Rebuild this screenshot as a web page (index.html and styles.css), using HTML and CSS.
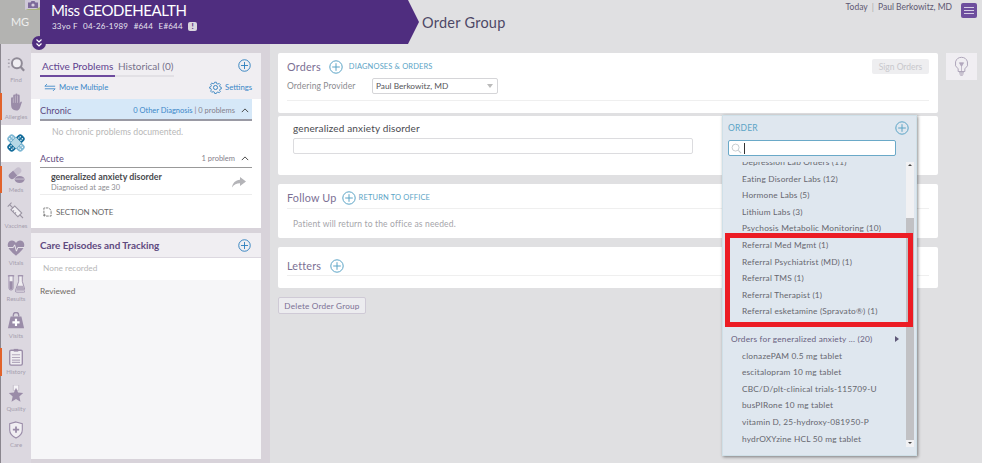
FILE: index.html
```html
<!DOCTYPE html>
<html lang="en">
<head>
<meta charset="utf-8">
<title>Order Group</title>
<link rel="stylesheet" href="styles.css">
</head>
<body>
<svg class="defs" width="0" height="0" aria-hidden="true">
  <symbol id="plus" viewBox="0 0 14 14"><circle cx="7" cy="7" r="6.200" fill="none" stroke="currentColor" stroke-width="1"/><path d="M7 3.200v7.600M3.200 7h7.600" stroke="currentColor" stroke-width="1" fill="none"/></symbol>
  <symbol id="chev" viewBox="0 0 10 6"><path d="M1 5l4-4 4 4" fill="none" stroke="currentColor" stroke-width="1.200"/></symbol>
</svg>
<div class="app">
  <header class="top">
    <div class="avatar">MG
      <svg class="cam" viewBox="0 0 15 10"><path d="M0 0h15v10H0z" fill="#cfc8d8"/><path d="M0 10l3-1h8l4-2v3z" fill="#a9b27c"/><path d="M3 2.500h2.500l1-1.500h3l1 1.500H13V8H3z" fill="#7d6a9a"/><circle cx="8" cy="5" r="1.600" fill="#d8d0e0"/></svg>
    </div>
    <div class="banner">
      <h1 class="patient">Miss GEODEHEALTH</h1>
      <div class="meta"><span>33yo F</span><span>04-26-1989</span><span>#644</span><span>E#644</span><b class="alert">!</b></div>
    </div>
    <h2 class="page-title">Order Group</h2>
    <div class="user">Today <i>|</i> Paul Berkowitz, MD</div>
    <button class="menu" aria-label="Menu"><span></span><span></span><span></span></button>
    <span class="expand"><svg viewBox="0 0 10 10"><path d="M2.500 1.500L5 4l2.500-2.500M2.500 5.500L5 8l2.500-2.500" fill="none" stroke="#fff" stroke-width="1.200"/></svg></span>
  </header>
  <div class="body">
    <nav class="rail">
      <a class="nav"><svg viewBox="0 0 20 20"><circle cx="11" cy="8" r="5.500" fill="#f0eef2" stroke="#8f8a96" stroke-width="2.200"/><path d="M15 12l4 4.500" stroke="#8f8a96" stroke-width="2.500"/><path d="M1 4h3M1 8h2M1 12h3" stroke="#a8a4ae" stroke-width="1.500" stroke-dasharray="2 1"/></svg>Find</a>
      <a class="nav flag"><svg viewBox="0 0 20 20"><path d="M4.500 12V6a1.200 1.200 0 012.400 0V3a1.200 1.200 0 012.400 0V1.800a1.200 1.200 0 012.400 0V3a1.200 1.200 0 012.400 0v9c0 0 .6-2 1.500-2.600l1 .6-2 6c-.6 2-2 3.500-4.500 3.500-3.500 0-5.500-2.200-5.500-5.500z" fill="#9a8ca8"/><path d="M7 6v5M9.300 3v8M11.700 3v8" stroke="#d8d3da" stroke-width=".6"/></svg>Allergies</a>
      <a class="nav on"><svg class="big" viewBox="0 0 22 22"><g transform="rotate(45 11 11)"><rect x="1" y="7" width="20" height="8" rx="3" fill="#7fb8d4"/><rect x="7" y="1" width="8" height="20" rx="3" fill="#146c9a"/><rect x="7" y="7" width="8" height="8" fill="#b6d8e6"/><g fill="#fff"><circle cx="9.500" cy="3.500" r=".7"/><circle cx="12.500" cy="3.500" r=".7"/><circle cx="9.500" cy="5.500" r=".7"/><circle cx="12.500" cy="5.500" r=".7"/><circle cx="9.500" cy="16.500" r=".7"/><circle cx="12.500" cy="16.500" r=".7"/><circle cx="9.500" cy="18.500" r=".7"/><circle cx="12.500" cy="18.500" r=".7"/><circle cx="3.500" cy="9.500" r=".7"/><circle cx="3.500" cy="12.500" r=".7"/><circle cx="5.500" cy="9.500" r=".7"/><circle cx="5.500" cy="12.500" r=".7"/><circle cx="16.500" cy="9.500" r=".7"/><circle cx="16.500" cy="12.500" r=".7"/><circle cx="18.500" cy="9.500" r=".7"/><circle cx="18.500" cy="12.500" r=".7"/></g></g></svg></a>
      <a class="nav flag"><svg viewBox="0 0 20 20"><g transform="rotate(-40 9 8)"><rect x="1" y="4.500" width="16" height="7" rx="3.500" fill="#c6bfce"/><path d="M1 8a3.500 3.500 0 013.500-3.500H9v7H4.500A3.500 3.500 0 011 8z" fill="#9a8ca8"/></g><ellipse cx="14" cy="15" rx="5.500" ry="3.800" fill="#9a8ca8"/><path d="M9 14.500h10" stroke="#dcd8e0" stroke-width=".8"/></svg>Meds</a>
      <a class="nav"><svg viewBox="0 0 20 20"><g transform="rotate(-45 10 10)"><rect x="7" y="5" width="6" height="11" fill="#f0eef2" stroke="#9a94a2" stroke-width="1.200"/><path d="M10 5V0M7 0h6M10 16v5M7 8h2M7 11h2" stroke="#9a94a2" stroke-width="1.200"/></g></svg>Vaccines</a>
      <a class="nav"><svg viewBox="0 0 20 20"><path d="M10 18.500C5 14.500 .8 11 .8 6.500.8 3.500 3.300 1.800 5.500 1.800 7.500 1.800 9 3 10 4.500 11 3 12.500 1.800 14.500 1.800 16.700 1.800 19.200 3.500 19.200 6.500c0 4.500-4.200 8-9.200 12z" fill="#9a8ca8"/><path d="M1 9.500h6l1.500-3 2 7L12 9.500h7" fill="none" stroke="#f0eef2" stroke-width="1"/></svg>Vitals</a>
      <a class="nav"><svg viewBox="0 0 20 20"><path d="M1 1h7M12 1h6" stroke="#9a8ca8" stroke-width="1.200"/><path d="M2.200 1h4.600v13.500a2.300 2.300 0 01-4.600 0z" fill="#efedf1" stroke="#9a8ca8"/><path d="M2.700 7h3.600v7.500a1.800 1.800 0 01-3.600 0z" fill="#9a8ca8"/><path d="M13 1h4v6l3 10a1.500 1.500 0 01-1.500 2H11a1.500 1.500 0 01-1.500-2L13 7z" fill="#efedf1" stroke="#9a8ca8"/><path d="M11.500 12h6.800l1.200 5.500H10z" fill="#b3a9bd"/></svg>Results</a>
      <a class="nav"><svg viewBox="0 0 20 20"><path d="M7 5V3.500a3 3 0 016 0V5" fill="none" stroke="#9a8ca8" stroke-width="1.500"/><path d="M4 5h12l3 13H1z" fill="#9a8ca8"/><path d="M10 7.500v8M6 11.500h8" stroke="#fff" stroke-width="2.400"/></svg>Visits</a>
      <a class="nav flag"><svg viewBox="0 0 20 20"><rect x="3" y="2.500" width="14" height="16.500" rx="1.500" fill="#f0eef2" stroke="#9a8ca8" stroke-width="1.500"/><rect x="7.500" y="1" width="5" height="3" fill="#9a8ca8"/><path d="M5.500 7.500h9M5.500 10.500h9M5.500 13.500h9M5.500 16h9" stroke="#b3a9bd" stroke-width="1.200"/></svg>History</a>
      <a class="nav"><svg viewBox="0 0 20 20"><path d="M7 0h6v6H7z" fill="#f5f3f7" stroke="#c5bfcb"/><path d="M10 3l2.300 5.400 5.700.5-4.300 3.800 1.300 5.800L10 15.500l-5 3 1.300-5.800L2 8.900l5.700-.5z" fill="#9a8ca8"/></svg>Quality</a>
      <a class="nav"><svg viewBox="0 0 20 20"><path d="M10 1l7 2v7c0 4-3 7-7 9-4-2-7-5-7-9V3z" fill="#f0eef2" stroke="#9a8ca8" stroke-width="1.200"/><path d="M10 6v7M6.500 9.500h7" stroke="#9a8ca8" stroke-width="2"/></svg>Care</a>
    </nav>
    <aside class="side">
      <section class="panel problems">
        <div class="panel-head">
          <div class="tabs">
            <span class="tab active">Active Problems</span><span class="tab">Historical (0)</span>
            <svg class="ico-plus blue"><use href="#plus"/></svg>
          </div>
          <div class="tools">
            <a class="tool"><svg class="move" viewBox="0 0 14 10"><path d="M3.500 1L1 3.500h12M10.500 9L13 6.500H1" fill="none" stroke="#3a87c8" stroke-width="1"/></svg>Move Multiple</a>
            <a class="tool"><svg class="gear" viewBox="0 0 14 14"><circle cx="7" cy="7" r="2.200" fill="none" stroke="#2f7fbe"/><path d="M6 1h2l.4 1.700 1.500.6L11.400 2.400 12.800 3.800 11.900 5.300 12.500 6.800 14 7.200V9l-1.500.2-.6 1.500.9 1.500-1.400 1.400-1.500-.9-1.500.6L8 14.500H6L5.600 12.800 4.100 12.200 2.600 13.100 1.200 11.700 2.100 10.200 1.500 8.700 0 8.300V6.700l1.500-.4.6-1.500-.9-1.500L2.600 2l1.500.9 1.500-.6z" transform="translate(.7 .4) scale(.9)" fill="none" stroke="#2f7fbe"/></svg>Settings</a>
          </div>
        </div>
        <div class="group chronic">
          <span class="group-name">Chronic</span>
          <span class="group-info"><a>0 Other Diagnosis</a> <i>|</i> 0 problems</span>
          <svg class="chev"><use href="#chev"/></svg>
        </div>
        <p class="empty">No chronic problems documented.</p>
        <div class="group acute">
          <span class="group-name">Acute</span>
          <span class="group-info">1 problem</span>
          <svg class="chev"><use href="#chev"/></svg>
        </div>
        <div class="problem">
          <div><strong>generalized anxiety disorder</strong><small>Diagnoised at age 30</small></div>
          <svg class="share" viewBox="0 0 14 11"><path d="M8 0l6 4.500L8 9V6.300C4.500 6.300 2 7.500 0 10.500 .6 6 3.500 3 8 2.700z" fill="#b4b4b8"/></svg>
        </div>
        <div class="note"><svg viewBox="0 0 10 11"><path d="M1 7V1h5l3 2.500V10H3" fill="none" stroke="#777" stroke-dasharray="3 1"/><path d="M0 9h3M1.500 7.500v3" stroke="#777"/></svg>SECTION NOTE</div>
      </section>
      <section class="panel care">
        <div class="care-head"><span>Care Episodes and Tracking</span><svg class="ico-plus blue"><use href="#plus"/></svg></div>
        <div class="none">None recorded</div>
        <div class="reviewed">Reviewed</div>
      </section>
    </aside>
    <main class="main">
      <div class="content">
        <section class="card orders">
          <div class="title-row"><h3>Orders</h3><svg class="ico-plus teal"><use href="#plus"/></svg><a class="link">DIAGNOSES &amp; ORDERS</a></div>
          <button class="sign">Sign Orders</button>
          <div class="provider"><label>Ordering Provider</label><div class="select">Paul Berkowitz, MD<i></i></div></div>
        </section>
        <section class="card dx">
          <div class="dx-name">generalized anxiety disorder</div>
          <div class="dx-input"></div>
        </section>
        <section class="card follow">
          <div class="title-row"><h3>Follow Up</h3><svg class="ico-plus teal"><use href="#plus"/></svg><a class="link">RETURN TO OFFICE</a></div>
          <p>Patient will return to the office as needed.</p>
        </section>
        <section class="card letters">
          <div class="title-row"><h3>Letters</h3><svg class="ico-plus teal"><use href="#plus"/></svg></div>
        </section>
        <button class="delete">Delete Order Group</button>
      </div>
      <div class="bulb"><svg viewBox="0 0 18 24"><path d="M9 1a7.500 7.500 0 00-4 13.800V18h8v-3.200A7.500 7.500 0 009 1z" fill="none" stroke="#a99fb5" stroke-width="1.100"/><path d="M6.500 7.500h5L9 12zM9 12v6" fill="#b5abc0" stroke="#a99fb5" stroke-width=".8"/><path d="M6 19.500h6M6.500 21h5M7.500 22.500h3" stroke="#a99fb5" stroke-width="1"/></svg></div>
    </main>
  </div>
  <div class="dropdown">
    <div class="dd-head"><span>ORDER</span><svg class="ico-plus teal dd-plus"><use href="#plus"/></svg></div>
    <div class="search"><svg viewBox="0 0 12 12"><circle cx="5" cy="5" r="3.800" fill="none" stroke="#c3c8cc"/><path d="M8 8l3 3" stroke="#c3c8cc" stroke-width="1.200"/></svg><i></i></div>
    <div class="dd-list">
      <ul class="items">
        <li>Depression Lab Orders (11)</li>
        <li>Eating Disorder Labs (12)</li>
        <li>Hormone Labs (5)</li>
        <li>Lithium Labs (3)</li>
        <li>Psychosis Metabolic Monitoring (10)</li>
        <li>Referral Med Mgmt (1)</li>
        <li>Referral Psychiatrist (MD) (1)</li>
        <li>Referral TMS (1)</li>
        <li>Referral Therapist (1)</li>
        <li class="last-group">Referral esketamine (Spravato®) (1)</li>
        <li class="group-item">Orders for generalized anxiety ... (20)<b></b></li>
        <li>clonazePAM 0.5 mg tablet</li>
        <li>escitalopram 10 mg tablet</li>
        <li>CBC/D/plt-clinical trials-115709-U</li>
        <li>busPIRone 10 mg tablet</li>
        <li>vitamin D, 25-hydroxy-081950-P</li>
        <li>hydrOXYzine HCL 50 mg tablet</li>
      </ul>
      <div class="scrollbar"><span class="up"></span><span class="thumb"></span><span class="down"></span></div>
    </div>
    <div class="redbox"></div>
  </div>
</div>
</body>
</html>
```
FILE: styles.css
```css
* { box-sizing: border-box; }
html, body { margin: 0; height: 100%; }
body { font-family: "Lato", "Open Sans", sans-serif; background: #e0e0e2; overflow: hidden; }
.defs { position: absolute; }
h1, h2, h3, p, ul { margin: 0; padding: 0; }
button { font-family: inherit; }
.app { position: relative; width: 982px; height: 463px; display: flex; flex-direction: column; overflow: hidden; }

/* header */
.top { position: relative; height: 44px; flex: none; display: flex; align-items: flex-start; }
.avatar { position: relative; width: 40px; height: 44px; background: #b3b3b1; color: #eee; font-size: 11px; text-align: center; line-height: 44px; flex: none; }
.cam { position: absolute; left: 25px; top: 0; width: 15px; height: 10px; }
.banner { width: 379px; height: 44px; flex: none; background: #4f2d7f; clip-path: polygon(0 0, 368px 0, 379px 22px, 368px 44px, 0 44px); padding: 0 0 0 11px; color: #fff; }
.patient { font-size: 15px; letter-spacing: -.45px; line-height: 20px; font-weight: 400; }
.meta { display: flex; align-items: center; gap: 5.500px; font-size: 8px; line-height: 12px; color: #e8e4f0; letter-spacing: .2px; padding-left: 1px; }
.alert { width: 9px; height: 9px; background: #d9d5de; color: #4f2d7f; border-radius: 2px; font-size: 8px; line-height: 9px; text-align: center; }
.page-title { font-size: 14.500px; font-weight: 400; color: #4d4866; letter-spacing: .25px; margin: 14px 0 0 3px; line-height: 18px; }
.user { margin: 1px 0 0 auto; font-size: 8.500px; line-height: 12px; color: #5e5872; }
.user i { font-style: normal; color: #aaa; margin: 0 2px; }
.menu { width: 16px; height: 15px; margin: 3px 5px 0 9px; padding: 4px 3px; border: 0; border-radius: 2px; background: #6e4f9e; display: flex; flex-direction: column; justify-content: space-between; }
.menu span { display: block; height: 1px; background: #d7cfe6; }
.expand { position: absolute; left: 32px; top: 36px; width: 14px; height: 14px; border-radius: 50%; background: #4f2d7f; display: flex; z-index: 3; }
.expand svg { width: 10px; height: 10px; margin: 2px; }

/* body */
.body { flex: 1; display: flex; min-height: 0; }
.rail { width: 31px; flex: none; background: #dcd8e0; padding-top: 8px; display: flex; flex-direction: column; border-left: 1px solid #8a868e; }
.nav { position: relative; height: 36.500px; flex: none; display: flex; flex-direction: column; align-items: center; justify-content: center; font-size: 6px; line-height: 8px; color: #a59eae; }
.nav svg { width: 18px; height: 18px; margin-bottom: 2px; }
.nav svg.big { width: 22px; height: 22px; margin: 0; }
.nav.on { background: #fff; }
.nav.flag::before { content: ""; position: absolute; left: -1px; top: 4px; bottom: 5px; width: 2px; background: #e2622b; }
.side { width: 239px; flex: none; background: #d8d3da; padding: 9px 9px 4px 0; display: flex; flex-direction: column; gap: 5px; }
.panel { background: #fff; }
.problems { height: 175px; }
.panel-head { height: 46px; background: #f0eef2; padding: 0 9px; }
.tabs { display: flex; align-items: center; height: 22px; padding-top: 3px; color: #77718a; position: relative; }
.tab { height: 20px; line-height: 15px; border-bottom: 2px solid #e2e0e5; margin-top: 2px; padding-top: 2px; font-size: 10px; white-space: nowrap; }
.tab.active { width: 75px; padding-left: 2px; color: #5f3f8f; border-bottom-color: #6d4a9e; }
.tab + .tab { width: 59px; padding-left: 3px; }
.ico-plus { width: 14px; height: 14px; flex: none; }
.ico-plus.blue { color: #2f7fbe; width: 13px; height: 13px; margin-right: 1px; }
.ico-plus.teal { color: #5ba4c6; }
.tabs .ico-plus { margin-left: auto; }
.tools { display: flex; justify-content: space-between; padding: 5px 0 0 4px; align-items: center; }
.tool { display: flex; align-items: center; gap: 3px; color: #3a87c8; font-size: 7.700px; line-height: 14px; }
.move { width: 12px; height: 9px; }
.gear { width: 13px; height: 13px; margin-right: 0; }
.group { margin: 0 9px; display: flex; align-items: center; font-size: 7.500px; color: #85808c; border-bottom: 1px solid #999; }
.chronic { height: 22px; padding-top: 2px; background: #d6e8f8; border-bottom: 2px solid #9a9aa4; }
.acute { height: 19px; margin-top: 11px; }
.group-name { font-size: 9.200px; color: #5f4a80; margin-right: auto; }
.group-info a { color: #3a87c8; }
.group-info i { font-style: normal; }
.chev { width: 8px; height: 5px; margin: 0 3px 0 6px; color: #444; }
.empty { font-size: 8.700px; color: #b8b8b8; padding: 4px 0 0 21px; height: 17px; line-height: 14px; }
.problem { margin: 0 9px; height: 27px; padding: 2px 6px 0 11px; display: flex; justify-content: space-between; align-items: center; border-bottom: 1px solid #ececec; }
.problem strong { display: block; font-size: 8.900px; line-height: 12px; color: #4a4a4e; }
.problem small { display: block; font-size: 7.500px; line-height: 10px; color: #8d8d92; }
.share { width: 14px; height: 11px; }
.note { display: flex; align-items: center; gap: 4px; margin: 10px 0 0 12px; font-size: 8px; color: #666; line-height: 14px; }
.note svg { width: 9px; height: 10px; }
.care { flex: 1; background: #f6f6f8; display: flex; flex-direction: column; }
.care-head { height: 25px; flex: none; background: #f0eef2; border-bottom: 1px solid #dcd8e0; padding: 0 9px; display: flex; align-items: center; justify-content: space-between; font-size: 9.900px; font-weight: 700; color: #5f4a80; }
.none { height: 22px; flex: none; background: #fff; color: #b8b8b8; font-size: 8.300px; line-height: 20px; padding-left: 12px; }
.reviewed { font-size: 8.300px; color: #716b66; padding: 5px 9px; line-height: 12px; }

/* main */
.main { flex: 1; display: flex; align-items: flex-start; padding: 9px 5px 0 8px; gap: 8px; background: #e0e0e2; min-width: 0; }
.content { width: 660px; flex: none; display: flex; flex-direction: column; align-items: flex-start; }
.card { width: 100%; background: #fff; padding: 0 9px; border-radius: 2px; }
.title-row { display: flex; align-items: center; border-bottom: 1px solid #efefef; }
.title-row h3 { font-size: 10.800px; font-weight: 400; color: #7b7094; letter-spacing: .2px; }
.link { font-size: 7.500px; color: #5ba4c6; letter-spacing: .15px; }
.orders { position: relative; height: 60px; }
.orders .title-row { border: 0; height: 24px; padding-top: 3px; }
.orders .ico-plus { margin: 0 6px 0 8px; }
.sign { position: absolute; right: 9px; top: 6px; width: 57px; height: 15px; border: 0; border-radius: 2px; background: #eeeef0; color: #c8c8cc; font-size: 8.500px; padding: 0; }
.provider { display: flex; align-items: center; height: 24px; border-bottom: 1px solid #efefef; padding-bottom: 5px; }
.provider label { width: 85px; font-size: 8.500px; color: #8b8b90; letter-spacing: .1px; }
.select { position: relative; width: 126px; height: 16px; border: 1px solid #d5d5d8; border-radius: 2px; font-size: 8.300px; color: #55555a; line-height: 14px; padding-left: 3px; }
.select i { position: absolute; right: 4px; top: 5px; border: 3.500px solid transparent; border-top: 4px solid #bbb; border-bottom: 0; }
.dx { height: 59px; margin-top: 3px; padding: 0 15px; }
.dx-name { font-size: 10px; color: #4a4a50; line-height: 13px; padding-top: 6px; height: 22px; letter-spacing: .15px; }
.dx-input { width: 400px; height: 16px; border: 1px solid #dcdcdf; border-radius: 2px; }
.follow { height: 54px; margin-top: 9px; }
.follow .title-row { height: 25px; padding-top: 3px; }
.follow .ico-plus { margin: 0 3px 0 5px; }
.follow p { font-size: 8.500px; color: #a5a5aa; padding: 9px 0 0 6px; line-height: 12px; letter-spacing: .15px; }
.letters { height: 41px; margin-top: 9px; }
.letters .title-row { height: 29px; padding-top: 9px; }
.letters .ico-plus { margin-left: 9px; }
.delete { margin-top: 9px; width: 88px; height: 17px; padding: 0; border: 1px solid #cfcad6; border-radius: 2px; background: #ececef; color: #7b7094; font-size: 8.200px; letter-spacing: .2px; }
.bulb { width: 31px; height: 27px; background: #f0eef2; display: flex; align-items: center; justify-content: center; }
.bulb svg { width: 15px; height: 21px; }

/* dropdown */
.dropdown { position: absolute; left: 722px; top: 115px; width: 195px; height: 341px; background: #dfe7ef; border: 1px solid #cfe0e8; box-shadow: 1px 1px 3px rgba(0,0,0,.45); padding: 0 2px 0 5px; z-index: 5; }
.dd-head { height: 24px; display: flex; align-items: center; justify-content: space-between; padding-right: 5px; color: #5ba4c6; font-size: 8.500px; letter-spacing: .2px; }
.search { width: 168px; height: 16px; background: #fff; border: 1px solid #6aa9c8; border-radius: 2px; display: flex; align-items: center; padding-left: 2px; gap: 2px; }
.search svg { width: 11px; height: 11px; }
.search i { width: 1px; height: 11px; background: #333; }
.dd-list { display: flex; height: 285px; margin-top: 6px; overflow: hidden; }
.items { flex: 1; list-style: none; font-size: 8.300px; color: #66666e; letter-spacing: .2px; margin-top: -8px; }
.items li { height: 16.600px; line-height: 16px; padding-left: 14px; white-space: nowrap; }
.items .last-group { margin-bottom: 11px; }
.items .group-item { position: relative; padding-left: 3px; color: #69617f; }
.group-item b { position: absolute; right: 7px; top: 5px; border: 3px solid transparent; border-left: 4px solid #5f5878; border-right: 0; }
.scrollbar { width: 8px; flex: none; background: #f1f1f3; display: flex; flex-direction: column; position: relative; }
.up, .down { height: 7px; position: relative; flex: none; }
.up::after, .down::after { content: ""; position: absolute; left: 2px; top: 2px; border: 2px solid transparent; }
.up::after { border-bottom: 2px solid #444; border-top: 0; }
.down::after { border-top: 2px solid #444; border-bottom: 0; }
.thumb { margin-top: 49px; flex: 1; background: #c1c1c4; }
.redbox { position: absolute; left: 2px; top: 117px; width: 188px; height: 94px; border: 5px solid #ec1c24; }
```
